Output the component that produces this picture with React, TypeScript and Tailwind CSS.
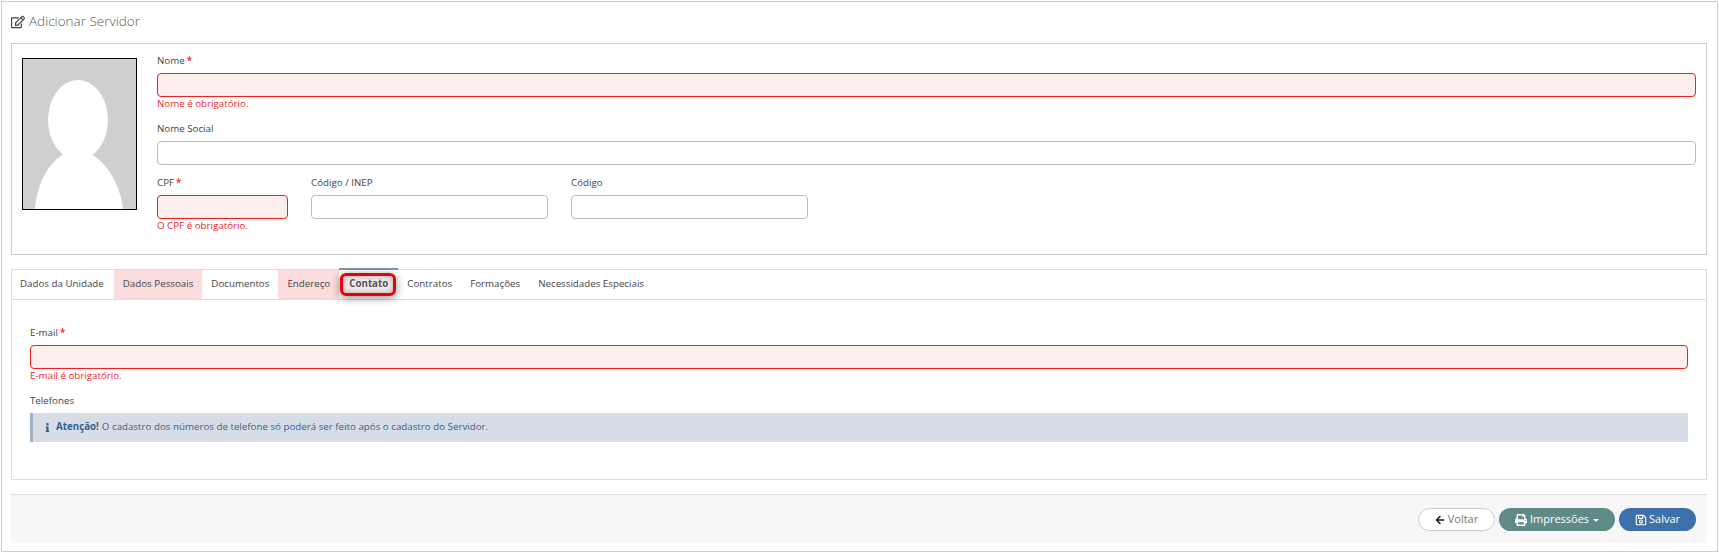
import React from 'react';
import { FaArrowLeft, FaInfo, FaPrint, FaRegEdit, FaRegSave } from 'react-icons/fa';

const tabs = [
  { label: 'Dados da Unidade', error: false },
  { label: 'Dados Pessoais', error: true },
  { label: 'Documentos', error: false },
  { label: 'Endereço', error: true },
  { label: 'Contato', active: true, error: false },
  { label: 'Contratos', error: false },
  { label: 'Formações', error: false },
  { label: 'Necessidades Especiais', error: false },
];

interface FieldProps {
  label: string;
  required?: boolean;
  error?: string;
  className?: string;
}

const Field: React.FC<FieldProps> = ({ label, required, error, className }) => (
  <div className={className}>
    <label className="block h-[16px] mb-[4px] leading-[15px] text-[#444]">
      {label}
      {required && <span className="text-[#e22] font-semibold ml-[2px]">*</span>}
    </label>
    <input
      type="text"
      className={`block w-full h-[24px] rounded-[4px] border outline-none ${
        error ? 'border-[#f0201c] bg-[#fdeeee]' : 'border-[#bbbbbb] bg-white'
      }`}
    />
    {error && <div className="h-[14px] leading-[14px] text-[#f01f1f]">{error}</div>}
  </div>
);

const Silhouette = () => (
  <svg viewBox="0 0 113 150" className="block w-full h-full">
    <rect width="113" height="150" fill="#cfcfcf" />
    <ellipse cx="55" cy="61" rx="30" ry="40" fill="#ffffff" />
    <path d="M12 150 C14 125 25 105 39 96 L70 96 C84 105 97 125 100 150 Z" fill="#ffffff" />
  </svg>
);

const App: React.FC = () => {
  return (
    <div className="h-[554px] p-[1px] bg-white font-['Open_Sans',sans-serif] text-[9.75px]">
      <div className="h-[551px] border border-[#cccccc] pl-[9px] pr-[10px]">
        <div className="h-[41px] flex items-center gap-[4px] pb-[2px]">
          <FaRegEdit className="w-[14px] h-[14px] text-[#444]" />
          <h1 className="text-[13.5px] font-light text-[#5a5a5a]">Adicionar Servidor</h1>
        </div>

        <div className="h-[212px] border border-[#cccccc] flex pl-[10px] pr-[10px]">
          <div className="w-[115px] h-[152px] mt-[14px] border border-black shrink-0">
            <Silhouette />
          </div>
          <div className="flex-1 ml-[20px] pt-[9px]">
            <Field label="Nome" required error="Nome é obrigatório." />
            <Field label="Nome Social" className="mt-[10px]" />
            <div className="flex gap-[23px] mt-[10px]">
              <Field label="CPF" required error="O CPF é obrigatório." className="w-[131px]" />
              <Field label="Código / INEP" className="w-[237px]" />
              <Field label="Código" className="w-[237px]" />
            </div>
          </div>
        </div>

        <div className="h-[211px] mt-[14px] border border-[#dddddd]">
          <div className="flex h-[30px] border-b border-[#dddddd]">
            {tabs.map(tab => (
              <div
                key={tab.label}
                className={`relative flex items-center px-[9px] first:pl-[8px] first:pr-[10px] ${
                  tab.error ? 'bg-[#fadcdc]' : ''
                } ${tab.active ? 'font-bold text-[#4a4f5c] px-[10px]' : 'text-[#444]'}`}
              >
                {tab.label}
                {tab.active && (
                  <>
                    <span className="absolute left-0 right-0 top-[-2px] h-[2px] bg-[#7f95a6]" />
                    <span className="absolute left-[1px] right-[2px] top-[3px] bottom-[3px] rounded-[6px] border-[3px] border-[#e8000b] bg-[rgba(190,110,110,0.12)] shadow-[0_2px_8px_rgba(0,0,0,0.45),inset_0_0_6px_rgba(0,0,0,0.3)]" />
                  </>
                )}
              </div>
            ))}
          </div>
          <div className="px-[18px] pt-[25px]">
            <Field label="E-mail" required error="E-mail é obrigatório." />
            <div className="mt-[10px] h-[16px] leading-[15px] text-[#444]">Telefones</div>
            <div className="mt-[4px] h-[29px] flex items-center border-l-[3px] border-[#9fb1c7] bg-[#d6dde6] pl-[10px] text-[#3b5f8e]">
              <FaInfo className="w-[9px] h-[9px] mr-[4px] text-[#3a5a80]" />
              <strong className="font-bold mr-[3px]">Atenção!</strong>
              O cadastro dos números de telefone só poderá ser feito após o cadastro do Servidor.
            </div>
          </div>
        </div>

        <div className="h-[49px] mt-[14px] border-t border-[#dddddd] bg-[#f7f7f7] flex items-center justify-end gap-[4px] pr-[11px] pt-[1px] text-[11px]">
          <button
            type="button"
            className="w-[77px] h-[23px] rounded-full border border-[#cccccc] bg-white text-[#777] flex items-center justify-center gap-[3px]"
          >
            <FaArrowLeft className="w-[10px] h-[10px] text-[#222]" />
            Voltar
          </button>
          <button
            type="button"
            className="w-[116px] h-[23px] rounded-full bg-[#5f8a87] text-white flex items-center justify-center gap-[3px]"
          >
            <FaPrint className="w-[12px] h-[12px]" />
            Impressões
            <span className="ml-[1px] mt-[2px] border-x-[3px] border-x-transparent border-t-[3px] border-t-white" />
          </button>
          <button
            type="button"
            className="w-[77px] h-[23px] rounded-full bg-[#3e70aa] text-white flex items-center justify-center gap-[2px]"
          >
            <FaRegSave className="w-[12px] h-[12px]" />
            Salvar
          </button>
        </div>
      </div>
    </div>
  );
};

export default App;
